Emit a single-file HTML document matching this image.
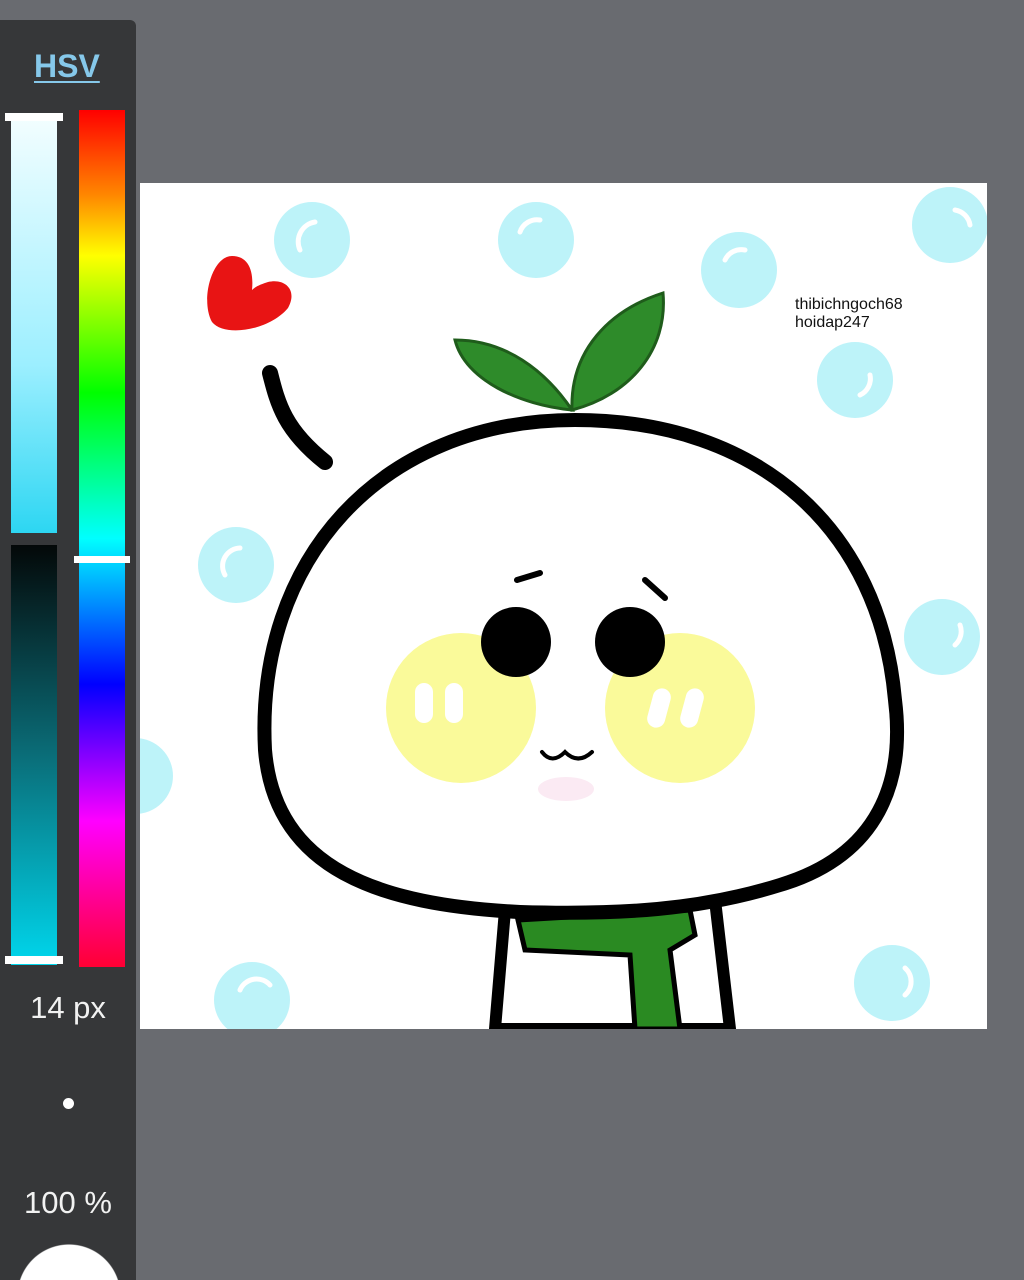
<!DOCTYPE html>
<html><head><meta charset="utf-8"><style>
html,body{margin:0;padding:0;width:1024px;height:1280px;overflow:hidden;background:#696b70;font-family:"Liberation Sans",sans-serif}
#w{position:relative;width:1024px;height:1280px;overflow:hidden}
.panel{position:absolute;left:0;top:20px;width:136px;height:1260px;background:#363739;border-radius:0 6px 0 0}
.hsv{position:absolute;left:34px;top:48px;color:#86c8ea;font-weight:bold;font-size:32px;text-decoration:underline;text-decoration-thickness:2px;text-underline-offset:4px}
.b1{position:absolute;left:11px;top:113px;width:46px;height:420px;background:linear-gradient(#f4feff,#9cefff 60%,#2dd6f2)}
.b2{position:absolute;left:11px;top:545px;width:46px;height:420px;background:linear-gradient(#040808,#0a6d78 50%,#00d6ec)}
.h{position:absolute;left:79px;top:110px;width:46px;height:857px;background:linear-gradient(#ff0000 0%,#ff8800 10%,#ffff00 17%,#00ff00 33%,#00ffff 50%,#0000ff 67%,#ff00ff 83%,#ff0033 100%)}
.k{position:absolute;background:#fff;height:8px}
.t{position:absolute;color:#f2f2f2;font-size:31px;width:136px;text-align:center}
</style></head><body><div id="w">
<div class="panel"></div>
<div class="hsv">HSV</div>
<div class="b1"></div><div class="b2"></div><div class="h"></div>
<div class="k" style="left:5px;top:113px;width:58px"></div>
<div class="k" style="left:5px;top:956px;width:58px"></div>
<div class="k" style="left:74px;top:556px;width:56px;height:7px"></div>
<div class="t" style="top:990px">14 px</div>
<div style="position:absolute;left:63px;top:1098px;width:11px;height:11px;border-radius:50%;background:#fff"></div>
<div class="t" style="top:1185px">100 %</div>
<div style="position:absolute;left:17px;top:1244px;width:104px;height:36px;background:radial-gradient(circle 52px at 52px 52px,#fff 51px,rgba(255,255,255,0) 52px)"></div>
<svg style="position:absolute;left:140px;top:183px" width="847" height="846" viewBox="140 183 847 846">
<rect x="140" y="183" width="847" height="846" fill="#fff"/>
<g fill="#bdf3f9">
<circle cx="312" cy="240" r="38"/><circle cx="536" cy="240" r="38"/><circle cx="739" cy="270" r="38"/><circle cx="950" cy="225" r="38"/>
<circle cx="855" cy="380" r="38"/><circle cx="236" cy="565" r="38"/><circle cx="942" cy="637" r="38"/><circle cx="135" cy="776" r="38"/>
<circle cx="252" cy="1000" r="38"/><circle cx="892" cy="983" r="38"/></g>
<g fill="none" stroke="#fff" stroke-width="5" stroke-linecap="round">
<path d="M300 250 A20 20 0 0 1 315 222"/><path d="M520 232 A18 18 0 0 1 540 220"/><path d="M725 260 A18 18 0 0 1 745 250"/>
<path d="M955 210 A18 18 0 0 1 970 225"/><path d="M870 375 A18 18 0 0 1 860 395"/><path d="M225 575 A18 18 0 0 1 240 548"/>
<path d="M960 625 A18 18 0 0 1 955 645"/><path d="M240 990 A18 18 0 0 1 270 985"/><path d="M905 968 A18 18 0 0 1 905 995"/></g>
<path d="M232 256 C212 256 200 300 212 322 C225 338 270 330 288 308 C298 290 285 278 268 282 C262 284 256 286 252 290 C254 270 248 256 232 256Z" fill="#e81414"/>
<path d="M270 373 C278 405 285 430 325 462" fill="none" stroke="#000" stroke-width="16" stroke-linecap="round"/>
<text x="795" y="309" font-size="16" fill="#111" font-family="Liberation Sans">thibichngoch68</text>
<text x="795" y="327" font-size="16" fill="#111" font-family="Liberation Sans">hoidap247</text>
<path d="M505 910 L495 1029 L730 1029 L715 900Z" fill="#fff" stroke="#000" stroke-width="12"/>
<path d="M518 920 L525 950 L630 955 L635 1029 L680 1029 L670 950 L695 935 L690 910 Z" fill="#2a8a22" stroke="#000" stroke-width="5"/>
<path d="M575 420 C380 420 255 560 265 750 C275 870 380 905 520 912 C620 915 700 910 780 885 C880 855 905 780 895 700 C880 530 760 420 575 420Z" fill="#fff" stroke="#000" stroke-width="14"/>
<path d="M572 410 C545 370 505 340 455 340 C465 380 520 405 572 410Z M572 410 C570 350 610 310 663 293 C668 350 630 395 572 410Z" fill="#2e8b2a" stroke="#1f5c1b" stroke-width="3"/>
<circle cx="461" cy="708" r="75" fill="#fafa9a"/><circle cx="680" cy="708" r="75" fill="#fafa9a"/>
<circle cx="516" cy="642" r="35" fill="#000"/><circle cx="630" cy="642" r="35" fill="#000"/>
<g fill="#fff"><rect x="415" y="683" width="18" height="40" rx="9"/><rect x="445" y="683" width="18" height="40" rx="9"/><rect x="650" y="688" width="18" height="40" rx="9" transform="rotate(15 659 708)"/><rect x="683" y="688" width="18" height="40" rx="9" transform="rotate(15 692 708)"/></g>
<path d="M517 580 L540 573 M645 580 L665 598" stroke="#000" stroke-width="6" stroke-linecap="round"/>
<path d="M542 752 Q552 765 565 752 Q578 765 592 752" fill="none" stroke="#000" stroke-width="4" stroke-linecap="round"/>
<ellipse cx="566" cy="789" rx="28" ry="12" fill="#fbeaf3"/>
</svg>
</div></body></html>
